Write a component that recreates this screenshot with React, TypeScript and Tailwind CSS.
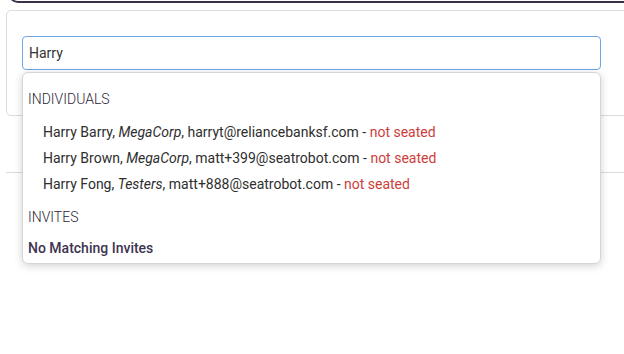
import React from 'react';

type Person = {
  name: string;
  company: string;
  email: string;
};

const people: Person[] = [
  { name: 'Harry Barry', company: 'MegaCorp', email: 'harryt@reliancebanksf.com' },
  { name: 'Harry Brown', company: 'MegaCorp', email: 'matt+399@seatrobot.com' },
  { name: 'Harry Fong', company: 'Testers', email: 'matt+888@seatrobot.com' },
];

export default function App() {
  return (
    <div
      className="relative w-[624px] h-[354px] overflow-hidden bg-white"
      style={{ fontFamily: 'Roboto, "Liberation Sans", sans-serif' }}
    >
      {/* bottom edge of the box above */}
      <div className="ml-[8px] -mt-[20px] h-[23px] rounded-bl-[10px] border-l-2 border-b-2 border-[#3b3046]" />

      {/* search card */}
      <div className="mt-[7px] ml-[6px] w-[640px] h-[106px] rounded-[5px] border border-[#dcdcdc] pt-[25px] pl-[15px]">
        <div className="relative w-[579px]">
          <div className="h-[34px] rounded-[4px] border border-[#6fa6e8] flex items-center px-[6px] text-[14px] text-[#333]">
            Harry
          </div>

          <div className="absolute left-0 top-[36px] z-10 w-[579px] h-[192px] rounded-[6px] border border-[#d6d6d6] bg-white shadow-[0_2px_8px_rgba(0,0,0,0.18)] px-[5px] pt-[17px]">
            <div className="text-[14px] font-light text-[#2c2436] leading-[18px]">INDIVIDUALS</div>
            <div className="mt-[15px] flex flex-col gap-[8px] pl-[15px]">
              {people.map((p) => (
                <div key={p.email} className="text-[14px] leading-[18px] text-[#2e2e2e]">
                  {p.name}, <i>{p.company}</i>, {p.email} - <span className="text-[#cc3d3b]">not seated</span>
                </div>
              ))}
            </div>
            <div className="mt-[15px] text-[14px] font-light text-[#2c2436] leading-[18px]">INVITES</div>
            <div className="mt-[13px] text-[14px] font-medium text-[#3d3450] leading-[18px]">No Matching Invites</div>
          </div>
        </div>
      </div>

      {/* lower section rule */}
      <div className="mt-[56px] ml-[6px] border-t border-[#dcdcdc]" />
    </div>
  );
}
